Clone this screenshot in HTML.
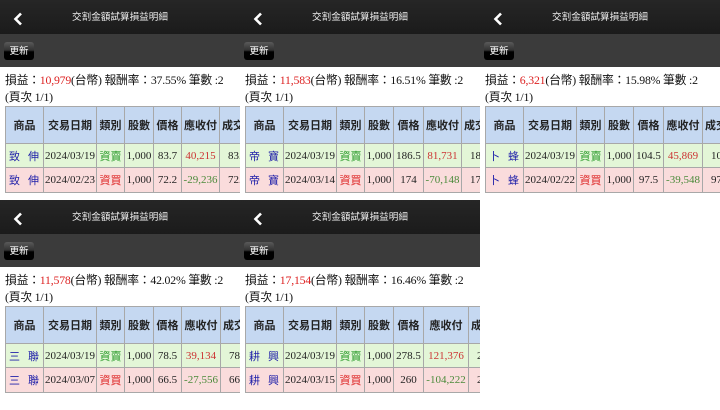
<!DOCTYPE html>
<html><head><meta charset="utf-8"><style>
*{margin:0;padding:0;box-sizing:border-box}
body{width:720px;height:410px;background:#fff;position:relative;overflow:hidden;font-family:"Liberation Serif","Noto Serif CJK SC",serif}
.p{position:absolute;width:240px;height:200px;overflow:hidden;background:#fff}
.hd{position:absolute;left:0;top:0;width:240px;height:34px;background:linear-gradient(#262626,#1b1b1b)}
.hd .t{position:absolute;left:0;width:240px;top:9px;text-align:center;color:#eee;font:9.6px "Noto Sans CJK TC",sans-serif}
.hd svg{position:absolute;left:13px;top:12px}
.tb{position:absolute;left:0;top:34px;width:240px;height:33px;background:#3b3b3b}
.btn{position:absolute;left:4px;top:8px;width:30px;height:18px;border-radius:3px;background:linear-gradient(#5a5a5a 0,#333 45%,#000 55%,#000);color:#fff;font:9.5px "Noto Sans CJK TC",sans-serif;text-align:center;line-height:17px}
.info{position:absolute;left:5px;top:72px;font-size:11.8px;line-height:17px;color:#111;white-space:nowrap;font-family:"Liberation Serif","Noto Sans CJK TC",serif;letter-spacing:-0.2px}
.info .r{color:#d22}
table{position:absolute;left:5px;top:106px;border-collapse:collapse;table-layout:fixed;font-size:11px;white-space:nowrap}
td,th{border:1px solid #a8a8a8;text-align:center;overflow:hidden}
th{background:#c5d8f1;height:37px;font:bold 11px "Noto Sans CJK TC",sans-serif;color:#222}
th:last-child{text-align:left;padding-left:2px}
td:last-child{text-align:left;padding-left:8px}
tr.g td{background:#e3f6d7;height:24px}
tr.k td{background:#fadcdc;height:25px}
td.n{color:#2222aa;font-family:"Noto Sans CJK TC",sans-serif;text-align:left;padding-left:3px}
td.n span{display:inline-block;width:19px}
td.s{color:#2a9a2a;font-family:"Noto Sans CJK TC",sans-serif}
td.b{color:#dd2222;font-family:"Noto Sans CJK TC",sans-serif}
td.pos{color:#c33}
td.neg{color:#4a8a3a}
td{color:#222}
</style></head><body>

<div class="p" style="left:0;top:0">
<div class="hd"><svg width="10" height="14" viewBox="0 0 10 14"><path d="M8 1.5L2.5 7L8 12.5" stroke="#fff" stroke-width="2.6" fill="none"/></svg><div class="t">交割金額試算損益明細</div></div>
<div class="tb"><div class="btn">更新</div></div>
<div class="info">損益：<span class="r">10,979</span>(台幣) 報酬率：37.55% 筆數 :2<br>(頁次 1/1)</div>
<table style="width:258px"><colgroup><col style="width:38px"><col style="width:53px"><col style="width:28px"><col style="width:29px"><col style="width:28px"><col style="width:38px"><col style="width:44px"></colgroup>
<tr><th>商品</th><th>交易日期</th><th>類別</th><th>股數</th><th>價格</th><th>應收付</th><th>成交價</th></tr>
<tr class="g"><td class="n"><span>致</span>伸</td><td>2024/03/19</td><td class="s">資賣</td><td>1,000</td><td>83.7</td><td class="pos">40,215</td><td>83.7</td></tr>
<tr class="k"><td class="n"><span>致</span>伸</td><td>2024/02/23</td><td class="b">資買</td><td>1,000</td><td>72.2</td><td class="neg">-29,236</td><td>72.2</td></tr></table>
</div>

<div class="p" style="left:240px;top:0">
<div class="hd"><svg width="10" height="14" viewBox="0 0 10 14"><path d="M8 1.5L2.5 7L8 12.5" stroke="#fff" stroke-width="2.6" fill="none"/></svg><div class="t">交割金額試算損益明細</div></div>
<div class="tb"><div class="btn">更新</div></div>
<div class="info">損益：<span class="r">11,583</span>(台幣) 報酬率：16.51% 筆數 :2<br>(頁次 1/1)</div>
<table style="width:262px"><colgroup><col style="width:38px"><col style="width:53px"><col style="width:28px"><col style="width:29px"><col style="width:30px"><col style="width:38px"><col style="width:46px"></colgroup>
<tr><th>商品</th><th>交易日期</th><th>類別</th><th>股數</th><th>價格</th><th>應收付</th><th>成交價</th></tr>
<tr class="g"><td class="n"><span>帝</span>寶</td><td>2024/03/19</td><td class="s">資賣</td><td>1,000</td><td>186.5</td><td class="pos">81,731</td><td>186.5</td></tr>
<tr class="k"><td class="n"><span>帝</span>寶</td><td>2024/03/14</td><td class="b">資買</td><td>1,000</td><td>174</td><td class="neg">-70,148</td><td>174</td></tr></table>
</div>

<div class="p" style="left:480px;top:0">
<div class="hd"><svg width="10" height="14" viewBox="0 0 10 14"><path d="M8 1.5L2.5 7L8 12.5" stroke="#fff" stroke-width="2.6" fill="none"/></svg><div class="t">交割金額試算損益明細</div></div>
<div class="tb"><div class="btn">更新</div></div>
<div class="info">損益：<span class="r">6,321</span>(台幣) 報酬率：15.98% 筆數 :2<br>(頁次 1/1)</div>
<table style="width:263px"><colgroup><col style="width:38px"><col style="width:53px"><col style="width:28px"><col style="width:29px"><col style="width:30px"><col style="width:39px"><col style="width:46px"></colgroup>
<tr><th>商品</th><th>交易日期</th><th>類別</th><th>股數</th><th>價格</th><th>應收付</th><th>成交價</th></tr>
<tr class="g"><td class="n"><span>卜</span>蜂</td><td>2024/03/19</td><td class="s">資賣</td><td>1,000</td><td>104.5</td><td class="pos">45,869</td><td>104.5</td></tr>
<tr class="k"><td class="n"><span>卜</span>蜂</td><td>2024/02/22</td><td class="b">資買</td><td>1,000</td><td>97.5</td><td class="neg">-39,548</td><td>97.5</td></tr></table>
</div>

<div class="p" style="left:0;top:200px;height:210px">
<div class="hd"><svg width="10" height="14" viewBox="0 0 10 14"><path d="M8 1.5L2.5 7L8 12.5" stroke="#fff" stroke-width="2.6" fill="none"/></svg><div class="t">交割金額試算損益明細</div></div>
<div class="tb"><div class="btn">更新</div></div>
<div class="info">損益：<span class="r">11,578</span>(台幣) 報酬率：42.02% 筆數 :2<br>(頁次 1/1)</div>
<table style="width:259px"><colgroup><col style="width:38px"><col style="width:53px"><col style="width:28px"><col style="width:29px"><col style="width:28px"><col style="width:39px"><col style="width:44px"></colgroup>
<tr><th>商品</th><th>交易日期</th><th>類別</th><th>股數</th><th>價格</th><th>應收付</th><th>成交價</th></tr>
<tr class="g"><td class="n"><span>三</span>聯</td><td>2024/03/19</td><td class="s">資賣</td><td>1,000</td><td>78.5</td><td class="pos">39,134</td><td>78.5</td></tr>
<tr class="k"><td class="n"><span>三</span>聯</td><td>2024/03/07</td><td class="b">資買</td><td>1,000</td><td>66.5</td><td class="neg">-27,556</td><td>66.5</td></tr></table>
</div>

<div class="p" style="left:240px;top:200px;height:210px">
<div class="hd"><svg width="10" height="14" viewBox="0 0 10 14"><path d="M8 1.5L2.5 7L8 12.5" stroke="#fff" stroke-width="2.6" fill="none"/></svg><div class="t">交割金額試算損益明細</div></div>
<div class="tb"><div class="btn">更新</div></div>
<div class="info">損益：<span class="r">17,154</span>(台幣) 報酬率：16.46% 筆數 :2<br>(頁次 1/1)</div>
<table style="width:271px"><colgroup><col style="width:38px"><col style="width:53px"><col style="width:28px"><col style="width:29px"><col style="width:30px"><col style="width:45px"><col style="width:48px"></colgroup>
<tr><th>商品</th><th>交易日期</th><th>類別</th><th>股數</th><th>價格</th><th>應收付</th><th>成交價</th></tr>
<tr class="g"><td class="n"><span>耕</span>興</td><td>2024/03/19</td><td class="s">資賣</td><td>1,000</td><td>278.5</td><td class="pos">121,376</td><td>278.5</td></tr>
<tr class="k"><td class="n"><span>耕</span>興</td><td>2024/03/15</td><td class="b">資買</td><td>1,000</td><td>260</td><td class="neg">-104,222</td><td>260</td></tr></table>
</div>

</body></html>
